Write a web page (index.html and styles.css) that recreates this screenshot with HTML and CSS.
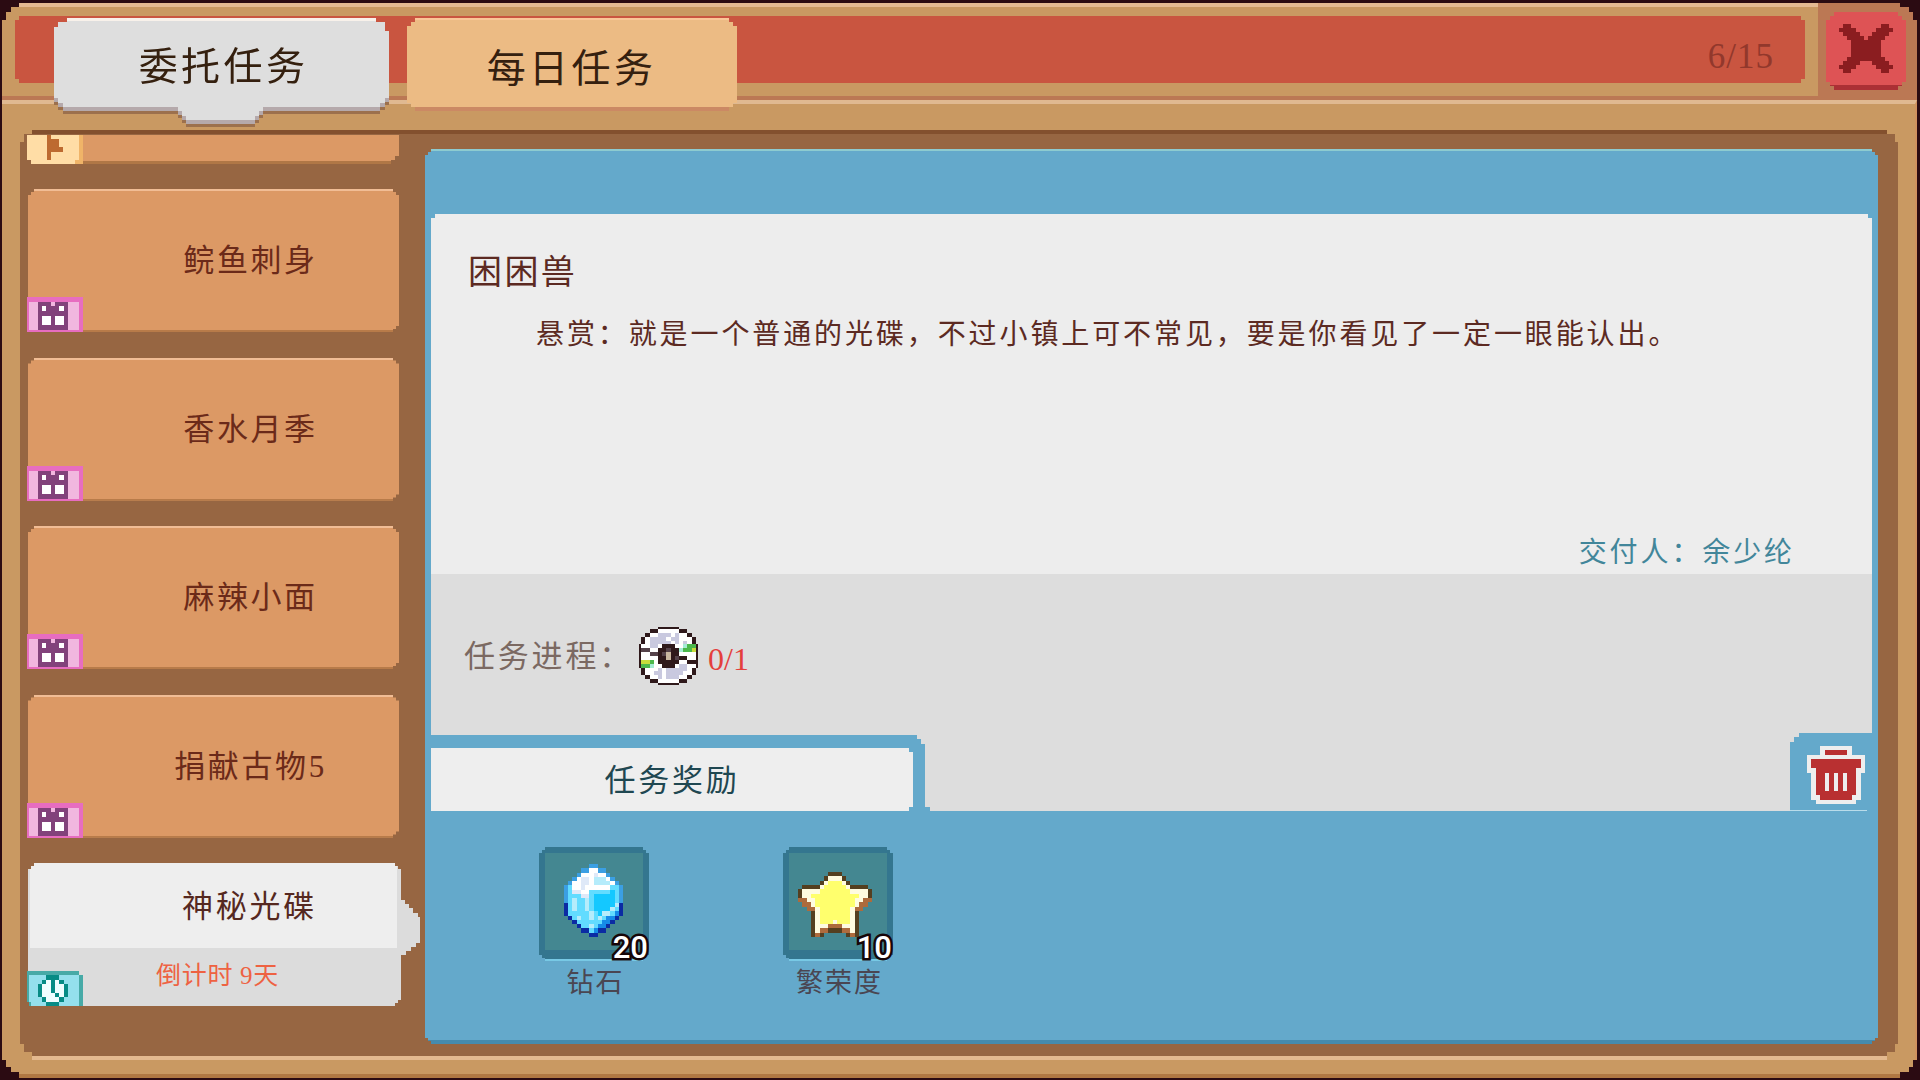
FILE: index.html
```html
<!DOCTYPE html>
<html lang="zh-CN">
<head>
    <meta charset="UTF-8">
    <meta name="viewport" content="width=device-width, initial-scale=1.0">
    <title>委托任务</title>
    <link rel="stylesheet" href="styles.css">
</head>
<body>

<div class="window">
    <header class="header">
        <div class="header-panel">
            <div class="red-bar">
                <nav class="tabs">
                    <div class="tab tab-active">
                        <div class="tab-shape"></div>
                        <span>委托任务</span>
                    </div>
                    <div class="tab tab-daily"><span>每日任务</span></div>
                </nav>
                <span class="counter">6/15</span>
            </div>
        </div>
        <button class="close-btn"><svg class="close-icon" data-sprite="cross"></svg></button>
    </header>

    <main class="body">
        <div class="board">
            <!-- Lista de tarefas -->
            <aside class="quests">
                <div class="quest quest-cut">
                    <svg class="badge badge-flag" data-sprite="flag"></svg>
                </div>
                <div class="quest"><span>鲩鱼刺身</span><svg class="badge" data-sprite="event"></svg></div>
                <div class="quest"><span>香水月季</span><svg class="badge" data-sprite="event"></svg></div>
                <div class="quest"><span>麻辣小面</span><svg class="badge" data-sprite="event"></svg></div>
                <div class="quest"><span>捐献古物5</span><svg class="badge" data-sprite="event"></svg></div>
                <div class="quest-selected">
                    <div class="quest-card">
                        <div class="quest-name">神秘光碟</div>
                        <div class="quest-time">倒计时 9天</div>
                    </div>
                    <div class="quest-arrow"></div>
                    <svg class="badge" data-sprite="clock"></svg>
                </div>
            </aside>

            <!-- Detalhe da tarefa -->
            <section class="detail">
                <div class="paper">
                    <div class="letter">
                        <h2>困困兽</h2>
                        <p class="desc">悬赏：就是一个普通的光碟，不过小镇上可不常见，要是你看见了一定一眼能认出。</p>
                        <p class="receiver">交付人：余少纶</p>
                    </div>
                    <div class="progress">
                        <span class="progress-label">任务进程：</span>
                        <svg class="disc" data-sprite="disc"></svg>
                        <span class="progress-num">0/1</span>
                    </div>
                    <div class="paper-foot">
                        <div class="reward-tab"><div class="reward-title">任务奖励</div></div>
                        <div class="trash-box">
                            <svg class="trash" data-sprite="trash"></svg>
                        </div>
                    </div>
                </div>
                <div class="rewards">
                    <div class="reward">
                        <div class="slot"><svg class="gem" data-sprite="gem"></svg><b class="amount">20</b></div>
                        <span>钻石</span>
                    </div>
                    <div class="reward">
                        <div class="slot"><svg class="star" data-sprite="star"></svg><b class="amount">10</b></div>
                        <span>繁荣度</span>
                    </div>
                </div>
            </section>
        </div>
    </main>
</div>

<script src="sprites.js"></script>
</body>
</html>
```
FILE: styles.css
```css
* {
    box-sizing: border-box;
}
body {
    margin: 0;
    padding: 3px 3px 2px 2px;
    width: 1920px;
    height: 1080px;
    overflow: hidden;
    background: #2b0b12;
    font-family: "Liberation Serif", "Noto Sans CJK SC", serif;
}
h2, p {
    margin: 0;
    font-weight: normal;
}
svg {
    display: block;
}

/* Cantos em degraus de pixel */
.tab-daily, .quest::before, .quest-card, .detail, .slot::before, .close-btn {
    --p: 3px;
    clip-path: polygon(
        0 calc(2 * var(--p)), var(--p) calc(2 * var(--p)), var(--p) var(--p), calc(2 * var(--p)) var(--p), calc(2 * var(--p)) 0,
        calc(100% - 2 * var(--p)) 0, calc(100% - 2 * var(--p)) var(--p), calc(100% - var(--p)) var(--p), calc(100% - var(--p)) calc(2 * var(--p)), 100% calc(2 * var(--p)),
        100% calc(100% - 2 * var(--p)), calc(100% - var(--p)) calc(100% - 2 * var(--p)), calc(100% - var(--p)) calc(100% - var(--p)), calc(100% - 2 * var(--p)) calc(100% - var(--p)), calc(100% - 2 * var(--p)) 100%,
        calc(2 * var(--p)) 100%, calc(2 * var(--p)) calc(100% - var(--p)), var(--p) calc(100% - var(--p)), var(--p) calc(100% - 2 * var(--p)), 0 calc(100% - 2 * var(--p)));
}

.window {
    height: 1075px;
    display: flex;
    flex-direction: column;
    background: #c99962;
    clip-path: polygon(0 17px, 4px 17px, 4px 9px, 9px 9px, 9px 4px, 17px 4px, 17px 0,
        1898px 0, 1898px 4px, 1907px 4px, 1907px 9px, 1911px 9px, 1911px 17px, 100% 17px,
        100% 1057px, 1911px 1057px, 1911px 1064px, 1907px 1064px, 1907px 1069px, 1898px 1069px, 1898px 100%,
        17px 100%, 17px 1069px, 9px 1069px, 9px 1064px, 4px 1064px, 4px 1057px, 0 1057px);
}

/* Cabeçalho */
.header {
    position: relative;
    z-index: 1;
    height: 97px;
    display: flex;
    background: #bb7854;
    border-bottom: 4px solid #bb7854;
}
.header-panel {
    width: 1816px;
    height: 93px;
    padding: 9px 13px 0;
    background: #c99962;
    border-top: 4px solid #e4ba92;
}
.red-bar {
    position: relative;
    height: 67px;
    display: flex;
    justify-content: space-between;
    padding-left: 39px;
}
.red-bar::before {
    content: "";
    position: absolute;
    inset: 0;
    background: #c95540;
    clip-path: polygon(0 4px, 4px 4px, 4px 0, 1786px 0, 1786px 4px, 100% 4px, 100% 63px, 1786px 63px, 1786px 100%, 4px 100%, 4px 63px, 0 63px);
}
.tabs {
    display: flex;
    gap: 18px;
    padding-top: 2px;
}
.tab {
    position: relative;
    height: 93px;
    display: flex;
    justify-content: center;
    font-size: 39px;
    letter-spacing: 3.4px;
    line-height: 84px;
    color: #35200f;
}
.tab-active {
    width: 335px;
    height: 110px;
    padding-left: 4px;
    filter: drop-shadow(0 4px 0 #b5a9ab) drop-shadow(0 3px 0 #9c704d);
}
.tab-shape {
    position: absolute;
    inset: 0;
    background: #dedede;
    border-top: 3px solid #f8f1ea;
    clip-path: polygon(0 9px, 4px 9px, 4px 4px, 13px 4px, 13px 0, 322px 0, 322px 4px, 331px 4px, 331px 13px, 335px 13px, 335px 80px, 331px 80px, 331px 85px, 326px 85px, 326px 89px, 209px 89px, 209px 93px, 205px 93px, 205px 98px, 201px 98px, 201px 102px, 132px 102px, 132px 98px, 128px 98px, 128px 93px, 124px 93px, 124px 89px, 9px 89px, 9px 85px, 4px 85px, 4px 80px, 0 80px);
}
.tab span {
    position: relative;
    padding-top: 7px;
}
.tab-daily {
    --p: 4px;
    width: 330px;
    background: #ecbb84;
    border-top: 2px solid #fac798;
    border-bottom: 4px solid #cb8964;
    padding-right: 1px;
}
.counter {
    position: relative;
    padding-right: 31px;
    font-size: 35px;
    line-height: 81px;
    letter-spacing: 1px;
    color: #92382c;
}
.close-btn {
    --p: 4px;
    width: 80px;
    height: 78px;
    margin: 9px 0 0 8px;
    padding: 11px 13px;
    border: 0;
    border-bottom: 5px solid #ab3035;
    background: #de5355;
}
.close-icon {
    width: 54px;
    height: 49px;
}

/* Corpo */
.body {
    height: 978px;
    padding: 26px 17px 0 18px;
    border-top: 4px solid #e0b991;
    border-right: 2px solid #d0925f;
    border-bottom: 4px solid #b07843;
    background: #c99962;
}
.board {
    height: 930px;
    display: flex;
    background: #976642;
    border-top: 4px solid #83502e;
    border-bottom: 4px solid #e4b98f;
    clip-path: polygon(0 12px, 4px 12px, 4px 4px, 12px 4px, 12px 0, 1867px 0, 1867px 4px, 1875px 4px, 1875px 12px, 100% 12px, 100% 914px, 1875px 914px, 1875px 922px, 1867px 922px, 1867px 100%, 12px 100%, 12px 922px, 4px 922px, 4px 914px, 0 914px);
}
.quests {
    width: 405px;
    padding: 1px 0 0 8px;
}
.quest {
    position: relative;
    width: 371px;
    height: 143px;
    margin-bottom: 25.5px;
    padding-left: 74px;
    font-size: 31px;
    letter-spacing: 2.6px;
    line-height: 144px;
    text-align: center;
    color: #6b2a19;
}
.quest::before {
    content: "";
    position: absolute;
    inset: 0;
    background: #dc9965;
    border-top: 2px solid #f1bd95;
    border-bottom: 2px solid #b87b49;
}
.quest span {
    position: relative;
}
.quest-cut {
    height: 29px;
    margin-bottom: 25px;
}
.quest-cut::before {
    border-top: 0;
    border-bottom: 3px solid #b07746;
    clip-path: polygon(0 0, 100% 0, 100% 21px, 367px 21px, 367px 25px, 363px 25px, 363px 100%, 4px 100%, 4px 25px, 0 25px);
}
.badge {
    position: absolute;
    left: -1px;
    bottom: 0;
    width: 56px;
    height: 35px;
}
.badge-flag {
    height: 29px;
}
.quest-selected {
    position: relative;
    width: 392px;
    height: 143px;
    display: flex;
}
.quest-card {
    width: 373px;
    padding: 0 4px 0 2px;
    background: #dcdcdc;
}
.quest-name {
    height: 85px;
    padding-left: 72px;
    background: #eeeeee;
    font-size: 31px;
    letter-spacing: 2.8px;
    line-height: 88px;
    text-align: center;
    color: #552820;
}
.quest-time {
    padding-left: 8px;
    font-size: 25px;
    letter-spacing: 0.7px;
    line-height: 56px;
    text-align: center;
    color: #ee6242;
}
.quest-arrow {
    width: 19px;
    height: 60px;
    margin-top: 37px;
    background: #dcdcdc;
    clip-path: polygon(0 0, 4px 0, 4px 4px, 8px 4px, 8px 8px, 12px 8px, 12px 13px, 17px 13px, 17px 17px, 19px 17px, 19px 43px, 15px 43px, 15px 47px, 10px 47px, 10px 51px, 5px 51px, 5px 55px, 0 55px);
}

/* Painel azul */
.detail {
    width: 1453px;
    height: 895px;
    margin-top: 15px;
    padding: 63px 6px 0;
    background: #64a9cb;
    border-top: 2px solid #8dcbd0;
    border-bottom: 4px solid #468bad;
}
.paper {
    height: 597px;
    background: #dddddd;
    clip-path: polygon(0 4px, 4px 4px, 4px 0, 1437px 0, 1437px 4px, 100% 4px, 100% 100%, 0 100%);
}
.letter {
    height: 360px;
    padding: 36px 77px 0 37px;
    background: #ededed;
    color: #5c2a22;
}
.letter h2 {
    font-size: 34px;
    letter-spacing: 2.4px;
    line-height: 46px;
}
.desc {
    padding: 17px 0 0 68px;
    font-size: 28px;
    letter-spacing: 2.9px;
    line-height: 44px;
    white-space: nowrap;
}
.receiver {
    padding-top: 174px;
    font-size: 28px;
    letter-spacing: 2.9px;
    line-height: 44px;
    text-align: right;
    color: #42869a;
}
.progress {
    height: 159px;
    display: flex;
    align-items: flex-start;
    padding: 53px 0 0 33px;
}
.progress-label {
    width: 175px;
    font-size: 31px;
    letter-spacing: 2.8px;
    line-height: 60px;
    white-space: nowrap;
    color: #7b6962;
}
.disc {
    width: 59px;
    height: 58px;
}
.progress-num {
    padding-left: 10px;
    font-size: 32px;
    line-height: 65px;
    color: #e43f3c;
}
.paper-foot {
    height: 78px;
    display: flex;
    justify-content: space-between;
}
.reward-tab {
    width: 499px;
    margin-top: 2px;
    padding-top: 13px;
    background: #64a9cb;
    clip-path: polygon(0 0, 486px 0, 486px 4px, 490px 4px, 490px 9px, 494px 9px, 494px 72px, 499px 72px, 499px 100%, 0 100%);
}
.reward-title {
    width: 482px;
    height: 63px;
    background: #eeeeee;
    font-size: 31px;
    letter-spacing: 2.8px;
    line-height: 65px;
    text-align: center;
    color: #1f4751;
    clip-path: polygon(0 0, 478px 0, 478px 4px, 100% 4px, 100% 59px, 478px 59px, 478px 100%, 0 100%);
}
.trash-box {
    width: 82px;
    padding: 13px 0 0 17px;
    background: linear-gradient(#b9dcea, #b9dcea) 0 100% / 77px 1px no-repeat #64a9cb;
    clip-path: polygon(0 9px, 4px 9px, 4px 4px, 9px 4px, 9px 0, 100% 0, 100% 100%, 0 100%);
}
.trash {
    width: 58px;
    height: 58px;
}

/* Recompensas */
.rewards {
    display: flex;
    gap: 134px;
    padding: 36px 0 0 108px;
}
.reward {
    width: 110px;
    text-align: center;
    font-size: 27px;
    letter-spacing: 2px;
    line-height: 44px;
    white-space: nowrap;
    color: #4a4652;
}
.reward > span {
    padding-left: 3px;
}
.slot {
    position: relative;
    height: 114px;
    padding: 17px 0 0 25px;
}
.slot::before {
    content: "";
    position: absolute;
    inset: 0;
    background: #448791;
    border: 6px solid #34768f;
    border-bottom: 2px solid #78c9e5;
    box-shadow: inset 0 -9px 0 #34768f;
}
.gem {
    position: relative;
    width: 59px;
    height: 73px;
}
.star {
    position: relative;
    width: 74px;
    height: 65px;
    margin: 8px 0 0 -10px;
}
.amount {
    position: absolute;
    right: 1px;
    bottom: -2px;
    font: 500 31px/30px Roboto, sans-serif;
    letter-spacing: 0;
    color: #fff;
    -webkit-text-stroke: 5px #160508;
    paint-order: stroke fill;
}
```
FILE: sprites.js
```js
// cada letra é uma cor da paleta, "." é transparente
const palette = {
    k: '#2f191b', w: '#ffffff', l: '#c9c9df', g: '#4cb84c', y: '#c7dc3c', q: '#a5ecd5', t: '#c9b7a0', h: '#55424a',
    b: '#3b9fe3', a: '#b5ecfb', c: '#62dcff', C: '#14c8ff', d: '#168be8', n: '#0b2ba3', e: '#dfe9f8',
    D: '#543f20', B: '#ad6b3d', i: '#fffbe0', Y: '#ffff6d',
    x: '#8b1d20', r: '#b93031', f: '#eeeeee',
    p: '#e76dc0', P: '#f1b7df', v: '#82427b',
    o: '#ffdda6', O: '#bd6a30', z: '#f0b468',
    m: '#47aaa7', M: '#94e0ed', T: '#078b85', W: '#effdff'
};

const sprites = {
    cross: [
        '.xx.......xx.',
        'xxxx.....xxxx',
        '.xxxx...xxxx.',
        '..xxxx.xxxx..',
        '...xxxxxxx...',
        '...xxxxxxx...',
        '...xxxxxxx...',
        '...xxxxxxx...',
        '..xxxxxxxxx..',
        '.xxxx...xxxx.',
        'xxxx.....xxxx',
        '.xx.......xx.'
    ],
    disc: [
        '.....kkkkk.....',
        '...kkwwwwwkk...',
        '..kwwlllwlwwk..',
        '.kwllllwllwwwk.',
        '.kwlllllwlwlwk.',
        'kwwllwkkkwwqggk',
        'khhwwkkhkkqggyk',
        'kwwhhkhtkkwwwwk',
        'kwwwwkktkhkkwwk',
        'kyygwkkkkkwwkkk',
        'kggqwwkkkwllwwk',
        '.kwwwlwlllllwk.',
        '.kwwllwllllwwk.',
        '..kwwlwlllwwk..',
        '...kkwwwwwkk...',
        '.....kkkkk.....'
    ],
    gem: [
        '......bb......',
        '....bbwwbb....',
        '...bwwwewwb...',
        '..bweewaaawb..',
        '.bwweewaaaawb.',
        'bcwwewwwwwwccb',
        'bceewwcccccCcb',
        'bccceecCCCCCcb',
        'bcaccacCCCCCcb',
        'ncaccacCCCCCan',
        'ncaccacCCCCacn',
        'ncccccacCaacdn',
        '.ncaccacacddn.',
        '..nccccccddn..',
        '...nccacddn...',
        '....nncdnn....',
        '......nn......'
    ],
    star: [
        '.......DDD.......',
        '......DiiiD......',
        '.....DiYYYiD.....',
        '.DDDDiYYYYYiDDDD.',
        'DiiiiYYYYYYYiiiiD',
        'DiiYYYYYYYYYYYiiD',
        'BBiiYYYYYYYYYiiBB',
        '.BBiYYYYYYYYYiBB.',
        '..BBiYYYYYYYiBB..',
        '...DiYYYYYYYiD...',
        '...DiYYYYYYYiD...',
        '...DiYYYiYYYiD...',
        '...DiiiBBBiiiD...',
        '...DiBBDDDBBiD...',
        '...DBD.....DBD...'
    ],
    trash: [
        '...fffffff...',
        '...frrrrrf...',
        'fffffffffffff',
        'frrrrrrrrrrrf',
        'frrrrrrrrrrrf',
        'ffrrrrrrrrrff',
        '.frrfrfrfrrf.',
        '.frrfrfrfrrf.',
        '.frrfrfrfrrf.',
        '.frrfrfrfrrf.',
        '.frrrrrrrrrf.',
        '.ffrrrrrrrff.',
        '..fffffffff..'
    ],
    // colunas com metade da largura
    event: [
        'pppppppppppppppppppppppppp',
        'pppppppppppppppppppppppppp',
        'pPPPPvvvvvvPPvvvvvvPPPPPpp',
        'pPPPPvvvvvvPPvvvvvvPPPPPpp',
        'pPPPPvvwwvvvvvvwwvvPPPPPpp',
        'pPPPPvvwwvvvvvvwwvvPPPPPpp',
        'pPPPPvvvvvvvvvvvvvvPPPPPpp',
        'pPPPPvvvvvvvvvvvvvvPPPPPpp',
        'pPPPPvvwwwwvvwwwwvvPPPPPpp',
        'pPPPPvvwwwwvvwwwwvvPPPPPpp',
        'pPPPPvvwwwwvvwwwwvvPPPPPpp',
        'pPPPPvvwwwwvvwwwwvvPPPPPpp',
        'pPPPPvvvvvvvvvvvvvvPPPPPpp',
        'pPPPPvvvvvvvvvvvvvvPPPPPpp',
        'pppppppppppppppppppppppppp'
    ],
    flag: [
        'oooooOoooooooz',
        'oooooOOOoooooz',
        'oooooOOOoooooz',
        'oooooOOOOooooz',
        'oooooOoooooooz',
        'oooooOoooooooz',
        '.ooooooooooozz'
    ],
    clock: [
        'mmmmmmmmmmmmmmmmmmmmmmmm..',
        'mMMMMMMMMTTTTTTMMMMMMMMMmm',
        'mMMMMMMTTWWTTWWTTMMMMMMMmm',
        'mMMMMTTWWWWTTWWWWTTMMMMMmm',
        'mMMMMTTWWWWTTWWWWTTMMMMMmm',
        'mMMMMTTWWWWWWTTWWTTMMMMMmm',
        'mMMMMMMTTWWWWWWTTMMMMMMMmm',
        '.mMMMMMMMTTTTTTMMMMMMMMMmm'
    ]
};

document.querySelectorAll('[data-sprite]').forEach(svg => {
    const name = svg.dataset.sprite;
    const rows = sprites[name];
    const cols = rows[0].length;
    // o contorno do disco tem meia célula
    const crop = name === 'disc' ? 0.5 : 0;
    svg.setAttribute('viewBox', `${crop} ${crop} ${cols - 2 * crop} ${rows.length - 2 * crop}`);
    svg.setAttribute('preserveAspectRatio', 'none');
    svg.setAttribute('shape-rendering', 'crispEdges');
    rows.forEach((row, y) => {
        for (const run of row.matchAll(/([^.])\1*/g)) {
            const rect = document.createElementNS('http://www.w3.org/2000/svg', 'rect');
            rect.setAttribute('x', run.index);
            rect.setAttribute('y', y);
            rect.setAttribute('width', run[0].length);
            rect.setAttribute('height', 1);
            rect.setAttribute('fill', palette[run[1]]);
            svg.appendChild(rect);
        }
    });
});
```
